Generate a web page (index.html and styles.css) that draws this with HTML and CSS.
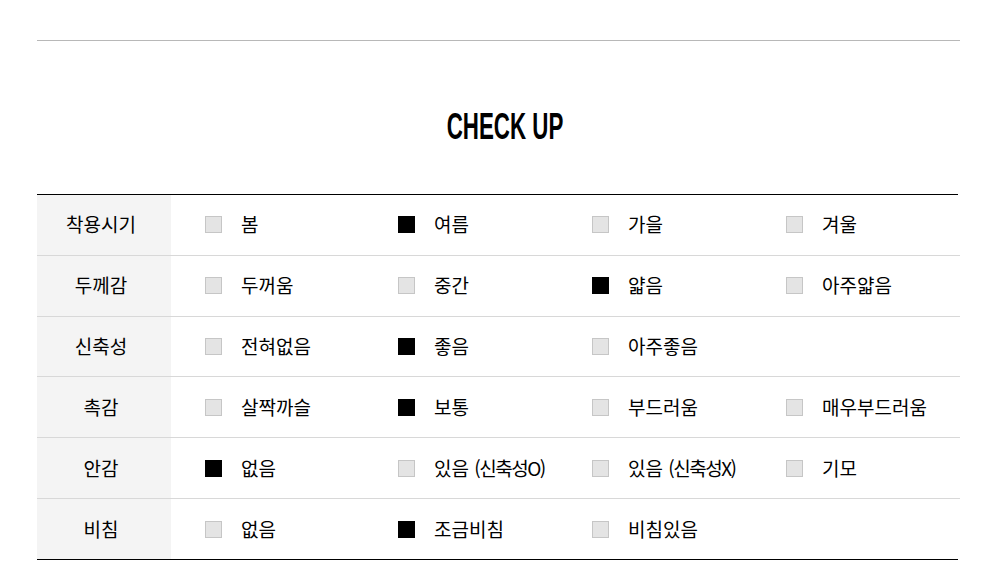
FILE: index.html
```html
<!DOCTYPE html>
<html lang="ko">
<head>
<meta charset="utf-8">
<link rel="stylesheet" href="styles.css">
</head>
<body>
<div class="wrap">
  <div class="topline"></div>
  <h2 class="title"><span>CHECK UP</span></h2>
  <div class="table">
    <div class="row">
      <div class="head">착용시기</div>
      <div class="cell"><i class="box"></i><span>봄</span></div>
      <div class="cell"><i class="box on"></i><span>여름</span></div>
      <div class="cell"><i class="box"></i><span>가을</span></div>
      <div class="cell"><i class="box"></i><span>겨울</span></div>
    </div>
    <div class="row">
      <div class="head">두께감</div>
      <div class="cell"><i class="box"></i><span>두꺼움</span></div>
      <div class="cell"><i class="box"></i><span>중간</span></div>
      <div class="cell"><i class="box on"></i><span>얇음</span></div>
      <div class="cell"><i class="box"></i><span>아주얇음</span></div>
    </div>
    <div class="row">
      <div class="head">신축성</div>
      <div class="cell"><i class="box"></i><span>전혀없음</span></div>
      <div class="cell"><i class="box on"></i><span>좋음</span></div>
      <div class="cell"><i class="box"></i><span>아주좋음</span></div>
      <div class="cell"></div>
    </div>
    <div class="row">
      <div class="head">촉감</div>
      <div class="cell"><i class="box"></i><span>살짝까슬</span></div>
      <div class="cell"><i class="box on"></i><span>보통</span></div>
      <div class="cell"><i class="box"></i><span>부드러움</span></div>
      <div class="cell"><i class="box"></i><span>매우부드러움</span></div>
    </div>
    <div class="row">
      <div class="head">안감</div>
      <div class="cell"><i class="box on"></i><span>없음</span></div>
      <div class="cell"><i class="box"></i><span>있음 <em>(신축성O)</em></span></div>
      <div class="cell"><i class="box"></i><span>있음 <em>(신축성X)</em></span></div>
      <div class="cell"><i class="box"></i><span>기모</span></div>
    </div>
    <div class="row last">
      <div class="head">비침</div>
      <div class="cell"><i class="box"></i><span>없음</span></div>
      <div class="cell"><i class="box on"></i><span>조금비침</span></div>
      <div class="cell"><i class="box"></i><span>비침있음</span></div>
      <div class="cell"></div>
    </div>
  </div>
</div>
</body>
</html>
```

FILE: styles.css
```css
html, body {
  margin: 0;
  padding: 0;
  background: #fff;
}
body {
  font-family: "Noto Sans CJK KR", "Noto Sans", sans-serif;
  color: #000;
}
.wrap {
  width: 923px;
  margin-left: 37px;
  padding-top: 40px;
}
.topline {
  height: 1px;
  background: #b8b8b8;
}
.title {
  margin: 0;
  height: 153px;
  display: flex;
  justify-content: center;
  align-items: center;
  padding-left: 14px;
  font-family: "Liberation Sans", sans-serif;
  font-weight: bold;
  font-size: 36px;
  color: #000;
}
.title span {
  display: inline-block;
  transform: scaleX(0.62);
  margin-top: 18px;
}
.table {
  width: 921px;
  border-top: 1px solid #000;
}
.row {
  display: grid;
  grid-template-columns: 134px 193px 194px 194px 1fr;
  height: 59.84px;
  border-bottom: 1px solid #d8d8d8;
  width: 923px;
}
.row.last {
  border-bottom: 1px solid #000;
  width: 921px;
}
.head {
  background: #f4f4f4;
  display: flex;
  align-items: center;
  justify-content: center;
  padding-right: 6px;
  font-size: 19px;
  padding-bottom: 2px;
}
.cell {
  display: flex;
  align-items: center;
  padding-left: 34px;
  font-size: 19px;
}
.cell span {
  margin-left: 19px;
  white-space: nowrap;
  margin-top: -2px;
}
.cell em {
  font-style: normal;
  letter-spacing: -1.5px;
}
.box {
  display: block;
  width: 15px;
  height: 15px;
  background: #e4e4e4;
  border: 1px solid #c6c6c6;
  flex: none;
}
.box.on {
  background: #000;
  border-color: #000;
}
```
